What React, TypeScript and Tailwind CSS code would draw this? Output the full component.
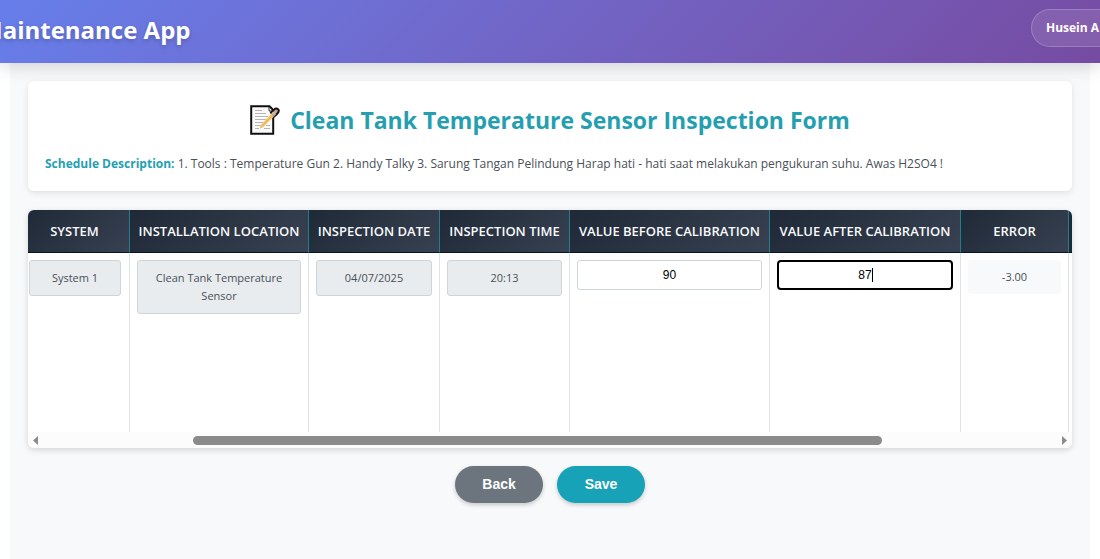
import React, { useState } from "react";

const UI = "font-['Open_Sans','Noto_Sans',sans-serif]";

const columns = [
  { label: "SYSTEM", width: "w-[102px] pr-2" },
  { label: "INSTALLATION LOCATION", width: "w-[179px]" },
  { label: "INSPECTION DATE", width: "w-[131px]" },
  { label: "INSPECTION TIME", width: "w-[130px]" },
  { label: "VALUE BEFORE CALIBRATION", width: "w-[200px]" },
  { label: "VALUE AFTER CALIBRATION", width: "w-[191px]" },
  { label: "ERROR", width: "w-[108px]" },
];

function MemoIcon() {
  return (
    <svg viewBox="0 0 30 30" className="size-[30px] shrink-0" aria-hidden="true">
      <path d="M1.2 1.2H19.5L23.2 5V28.8H1.2Z" fill="#fafafa" stroke="#111" strokeWidth="2" />
      <path d="M19 2V6H23" fill="none" stroke="#333" strokeWidth="1" />
      <path d="M5 5.5H12" stroke="#c9a9a9" strokeWidth="1" />
      <path
        d="M5 8.5H16M5 11.5H18M5 14.5H16M5 17.5H13M5 20.5H11M5 23.5H9M16 20.5H20M14 23.5H20"
        stroke="#b5b5b5"
        strokeWidth="1"
      />
      <path d="M21 7.5L25 3.8Q27.5 3 28.8 5.2Q29 7.4 26.8 9.2L23.5 12Z" fill="#d59c98" stroke="#111" strokeWidth="2" />
      <path d="M10.5 20.5L21.5 8.5L24.3 11L13 22.2L9.8 23.8Z" fill="#f5c467" />
      <path d="M11.5 21.5L23 9.8" stroke="#e0a94c" strokeWidth="0.7" />
      <path d="M21.3 8.4L23.2 6.5L26 9.2L24.2 11Z" fill="#c8b8aa" />
    </svg>
  );
}

function ReadOnly({ children }: { children: React.ReactNode }) {
  return (
    <div className="rounded-[3px] border border-[#ced4da] bg-[#e9ecef] px-2 py-2 text-center text-[11px] leading-[18px] font-medium text-[#495057]">
      {children}
    </div>
  );
}

export default function App() {
  const [before, setBefore] = useState("90");
  const [after, setAfter] = useState("87");
  const error = (Number(after) - Number(before)).toFixed(2);
  const cell = "border-r border-[#dee2e6] px-[7px] pt-[7px] align-top";

  return (
    <div className={`flex min-h-screen flex-col overflow-hidden bg-white ${UI}`}>
      <header className="relative flex h-[63px] shrink-0 items-center justify-between bg-linear-135 from-[#667eea] to-[#764ba2] pb-1 shadow-[0_4px_16px_rgba(0,0,0,0.15)]">
        <h1 className="-ml-5 whitespace-nowrap text-2xl font-bold text-white [text-shadow:0_2px_4px_rgba(0,0,0,0.2)]">
          Maintenance App
        </h1>
        <div className="mb-1 flex h-[38px] w-[69px] items-center overflow-hidden whitespace-nowrap rounded-l-full border border-r-0 border-white/20 bg-white/10 pl-[14px] text-xs font-bold text-white">
          Husein A
        </div>
      </header>

      <main className="mx-[10px] flex-1 bg-[#f7f9fb] px-[18px] pt-[18px]">
        <section className="h-[110px] rounded-md bg-white px-[17px] pt-5 shadow-[0_2px_6px_rgba(0,0,0,0.1)]">
          <h2 className="flex h-[38px] items-center justify-center gap-[10px] whitespace-nowrap text-[23px] font-bold text-[#259fb0]">
            <MemoIcon />
            Clean Tank Temperature Sensor Inspection Form
          </h2>
          <p className="mt-[15px] whitespace-nowrap text-xs leading-5 text-[#495057]">
            <strong className="font-bold text-[#259fb0]">Schedule Description:</strong> 1. Tools : Temperature Gun 2.
            Handy Talky 3. Sarung Tangan Pelindung Harap hati - hati saat melakukan pengukuran suhu. Awas H2SO4 !
          </p>
        </section>

        <section className="mt-[19px] overflow-hidden rounded-md bg-white shadow-[0_2px_6px_rgba(0,0,0,0.15)]">
          <table className="w-full table-fixed border-separate border-spacing-0">
            <thead>
              <tr className="h-[43px]">
                {columns.map((c) => (
                  <th
                    key={c.label}
                    className={`${c.width} whitespace-nowrap border-r border-b border-r-[#1f7f8e] border-b-[#0b1220] bg-linear-135 from-[#1f2937] to-[#374151] pt-[2px] pb-0 pl-0 text-center text-[13px] font-semibold text-[#f8fafc]`}
                  >
                    {c.label}
                  </th>
                ))}
                <td className="border-b border-[#0b1220] bg-[#1f2937] p-0" />
              </tr>
            </thead>
            <tbody>
              <tr className="h-[179px]">
                <td className="border-r border-[#dee2e6] pt-[7px] pr-2 pl-px align-top">
                  <ReadOnly>System 1</ReadOnly>
                </td>
                <td className={cell}>
                  <ReadOnly>Clean Tank Temperature Sensor</ReadOnly>
                </td>
                <td className={cell}>
                  <ReadOnly>04/07/2025</ReadOnly>
                </td>
                <td className={cell}>
                  <ReadOnly>20:13</ReadOnly>
                </td>
                <td className={cell}>
                  <input
                    aria-label="Value before calibration"
                    value={before}
                    onChange={(e) => setBefore(e.target.value)}
                    className="block h-[30px] w-full rounded-[3px] border border-[#ced4da] bg-white text-center font-['Liberation_Sans',Arial,sans-serif] text-xs text-black"
                  />
                </td>
                <td className={cell}>
                  <div className="relative">
                    <input
                      aria-label="Value after calibration"
                      value={after}
                      onChange={(e) => setAfter(e.target.value)}
                      className="block h-[30px] w-full rounded-[4px] border-2 border-black bg-white text-center font-['Liberation_Sans',Arial,sans-serif] text-xs text-black outline-none"
                    />
                    <span className="pointer-events-none absolute top-2 left-1/2 ml-[7px] h-[14px] w-px bg-black" />
                  </div>
                </td>
                <td className={cell}>
                  <div className="rounded-[3px] bg-[#f8f9fa] py-2 text-center text-[11px] leading-[18px] text-[#495057]">
                    {error}
                  </div>
                </td>
                <td />
              </tr>
            </tbody>
          </table>
          <div className="flex h-4 items-center bg-[#fcfcfc] px-[5px]">
            <svg viewBox="0 0 5 9" className="h-[9px] w-[5px]" aria-hidden="true">
              <path d="M5 0V9L0 4.5Z" fill="#8b8b8b" />
            </svg>
            <div className="mx-2 flex flex-1">
              <div className="ml-[14.6%] h-[9px] w-[68.3%] rounded-full bg-[#8b8b8b]" />
            </div>
            <svg viewBox="0 0 5 9" className="h-[9px] w-[5px]" aria-hidden="true">
              <path d="M0 0V9L5 4.5Z" fill="#8b8b8b" />
            </svg>
          </div>
        </section>

        <div className="mt-[18px] flex justify-center gap-[14px] font-['Liberation_Sans',Arial,sans-serif] text-sm font-bold text-white">
          <button type="button" className="h-[37px] w-[88px] rounded-full bg-[#6c757d] pb-px shadow-[0_2px_4px_rgba(0,0,0,0.2)]">
            Back
          </button>
          <button type="button" className="h-[37px] w-[88px] rounded-full bg-[#17a2b8] pb-px shadow-[0_2px_4px_rgba(0,0,0,0.2)]">
            Save
          </button>
        </div>
      </main>
    </div>
  );
}
